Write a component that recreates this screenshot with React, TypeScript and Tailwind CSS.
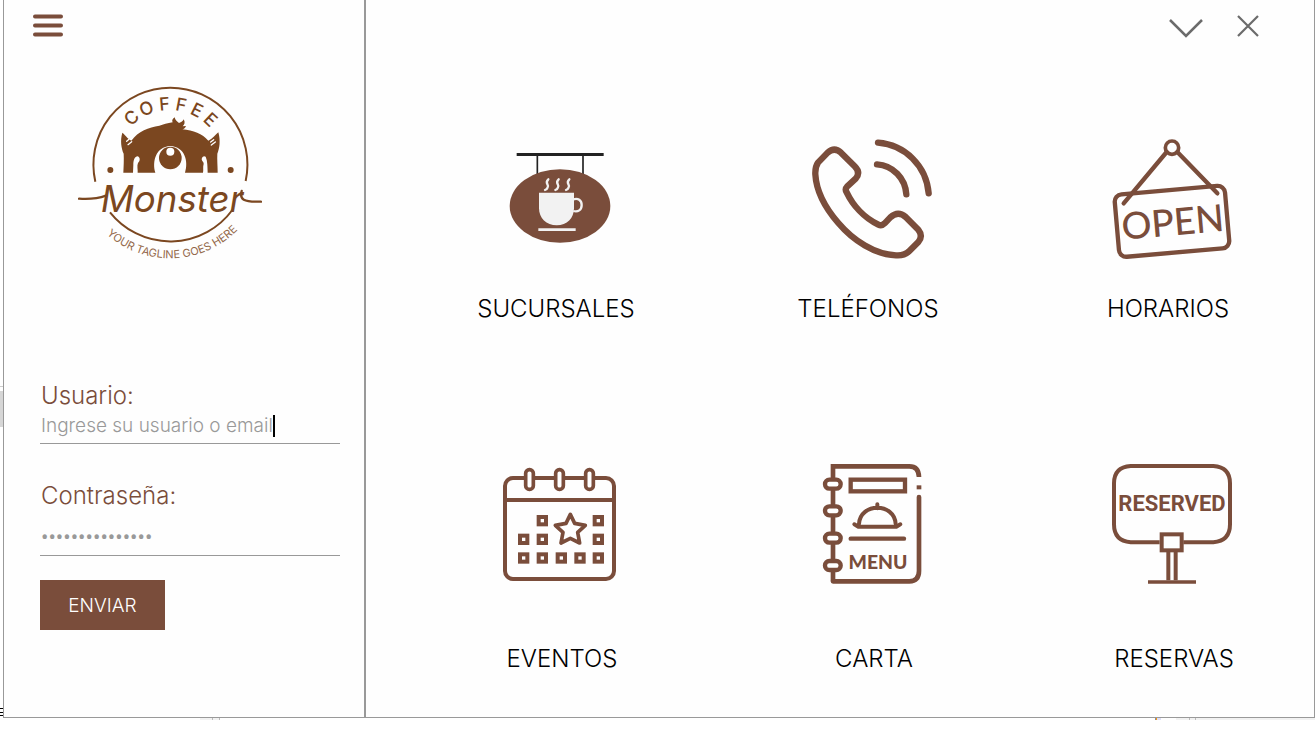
import type { ReactNode } from "react";

const BROWN = "#7a4d3b";
const LOGO = "#7b4720";

type Glyph = { char: string; angle: number; width: number };

const COFFEE: Glyph[] = [
  { char: "C", angle: -40, width: 41 },
  { char: "O", angle: -23, width: 43 },
  { char: "F", angle: -5, width: 33 },
  { char: "F", angle: 11, width: 33 },
  { char: "E", angle: 27, width: 34 },
  { char: "E", angle: 43, width: 34 },
];

function CoffeeArc() {
  const radius = 160;
  const placed = COFFEE.map(({ angle, width }) => {
    const a = (angle * Math.PI) / 180;
    return {
      x: 300 + radius * Math.sin(a) - (width / 2) * Math.cos(a),
      y: 265 - radius * Math.cos(a) - (width / 2) * Math.sin(a),
    };
  });
  return (
    <text
      x={placed.map((p) => p.x.toFixed(1)).join(" ")}
      y={placed.map((p) => p.y.toFixed(1)).join(" ")}
      rotate={COFFEE.map((g) => g.angle).join(" ")}
      fontSize="54"
      fontWeight="500"
      fill={LOGO}
    >
      COFFEE
    </text>
  );
}

function Logo() {
  return (
    <svg viewBox="24 33 552 522" className="h-[174px] w-[184px] font-['Inter',sans-serif]" role="img" aria-label="Coffee Monster">
      <g fill="none" stroke={LOGO} strokeWidth="6">
        <path d="M76 320A231 231 0 1 1 527 318" />
        <path d="M120 412A231 231 0 0 0 487 405" />
        <path d="M27 371C55 373 80 372 108 362" strokeWidth="7" strokeLinecap="round" />
        <path d="M515 348C508 374 520 381 573 380" strokeWidth="7" strokeLinecap="round" />
      </g>
      <CoffeeArc />
      <path
        fill={LOGO}
        d="M157 173C165 178 171 190 184 197C205 168 236 157 268 152C280 148 292 145 308 142C305 137 307 132 314 127C315 135 321 139 327 144C334 142 339 138 341 133C346 142 344 149 338 154L348 153C346 159 342 162 337 163C370 166 397 176 415 197C429 190 436 180 445 172C452 196 449 220 442 236C441 254 443 274 443 293H413C412 274 413 259 407 245C402 241 396 245 395 253C396 260 402 261 401 267C398 276 401 285 399 293H345C356 260 345 215 301 213C257 215 246 260 256 293H203C204 283 200 273 204 264C211 258 211 247 203 244C194 244 190 255 190 270L189 293H160C161 274 162 255 161 236C154 220 150 196 157 173Z"
      />
      <path fill="none" stroke="#fff" strokeWidth="4" strokeLinecap="round" d="M170 199l7-6M174 209l11-9M422 201l9-7M424 210l12-9" />
      <circle cx="301" cy="249" r="34" fill={LOGO} />
      <circle cx="301" cy="230" r="12" fill="#fff" />
      <circle cx="121" cy="285" r="9" fill={LOGO} />
      <circle cx="482" cy="285" r="9" fill={LOGO} />
      <text x="306" y="412" textAnchor="middle" fontSize="110" fontStyle="italic" fontWeight="400" fill={LOGO}>
        Monster
      </text>
      <path id="tagline-arc" d="M15 265A285 285 0 0 0 585 265" fill="none" />
      <text fontSize="33" fill="#94694a" textAnchor="middle">
        <textPath href="#tagline-arc" startOffset="51%">
          YOUR TAGLINE GOES HERE
        </textPath>
      </text>
    </svg>
  );
}

const iconClass = "size-[120px] font-['Inter',sans-serif]";

function BranchIcon() {
  return (
    <svg viewBox="30 27 360 360" className={iconClass} aria-hidden="true">
      <path d="M80 73.500H341" stroke="#222" strokeWidth="9" />
      <path d="M142 78V135M279 78V135" stroke="#222" strokeWidth="5" />
      <ellipse cx="210" cy="228" rx="151" ry="110" fill={BROWN} />
      <path d="M147 188H252V235C252 264 231 286 200 286C169 286 147 264 147 235Z" fill="#f2f2f2" />
      <g fill="none" stroke="#f2f2f2">
        <path d="M250 208C264 203 275 211 275 225C275 240 264 247 250 243" strokeWidth="7" />
        <path d="M145 299H257" strokeWidth="8" />
        <path d="M175 148C162 159 179 165 173 172Q171 178 165 180M206 148C193 159 210 165 204 172Q202 178 196 180M238 148C225 159 242 165 236 172Q234 178 228 180" strokeWidth="7" strokeLinecap="round" />
      </g>
    </svg>
  );
}

function PhoneIcon() {
  return (
    <svg viewBox="66 27 360 360" className={iconClass} aria-hidden="true">
      <g fill="none" stroke={BROWN} strokeWidth="19" strokeLinecap="round" strokeLinejoin="round">
        <path d="M84 98L113 68Q133 50 153 68L194 109Q213 128 197 146L171 170Q164 177 170 187C188 225 222 263 265 284Q275 289 284 280L301 262Q324 241 347 261L385 299Q400 318 385 336L358 363Q343 378 318 376C255 374 190 332 145 279C105 233 79 184 76 133Q75 111 84 98Z" />
        <path d="M261 103C309 106 346 145 349 193" />
        <path d="M264 38C344 44 409 107 416 190" />
      </g>
    </svg>
  );
}

function OpenIcon() {
  return (
    <svg viewBox="66 27 360 360" className={iconClass} aria-hidden="true">
      <g fill="none" stroke={BROWN} strokeWidth="13" strokeLinecap="round" strokeLinejoin="round">
        <circle cx="246" cy="53" r="20" strokeWidth="11" />
        <path d="M230 66L101 220M262 66L382 190" />
        <rect x="80" y="180" width="332" height="188" rx="22" transform="rotate(-5 246 274)" />
      </g>
      <text
        x="248"
        y="316"
        textAnchor="middle"
        fontSize="112"
        fontWeight="500"
        fill={BROWN}
        transform="rotate(-5 248 274)"
        className="font-['Lato',sans-serif]"
      >
        OPEN
      </text>
    </svg>
  );
}

const DAYS: [number, number][] = [
  [157, 197], [325, 197],
  [101, 253], [157, 253], [325, 253],
  [101, 309], [157, 309], [214, 309], [270, 309], [325, 309],
];

function CalendarIcon() {
  return (
    <svg viewBox="30 27 360 360" className={iconClass} aria-hidden="true">
      <g fill="none" stroke={BROWN} strokeWidth="12">
        <rect x="45" y="69" width="327" height="303" rx="24" />
        <path d="M45 135H372" />
        {DAYS.map(([x, y]) => (
          <rect key={`${x}-${y}`} x={x - 11} y={y - 11} width="22" height="22" />
        ))}
        <path d="M241 178L254 205L286 211L263 232L269 264L241 250L213 264L219 232L196 211L228 205Z" strokeWidth="11" strokeLinejoin="round" />
        <g fill="#fff" strokeWidth="11">
          <rect x="107" y="44" width="23" height="59" rx="11" />
          <rect x="197" y="44" width="23" height="59" rx="11" />
          <rect x="287" y="44" width="23" height="59" rx="11" />
        </g>
      </g>
    </svg>
  );
}

function MenuCardIcon() {
  return (
    <svg viewBox="36 27 360 360" className={iconClass} aria-hidden="true">
      <g fill="none" stroke={BROWN} strokeWidth="14">
        <path d="M99 379V34H328Q356 34 357 66" />
        <path d="M99 379H328Q357 378 357 348V126" strokeLinecap="round" />
        <path d="M350 97H364" strokeWidth="12" />
        <rect x="152" y="74" width="163" height="35" strokeWidth="13" />
        <path d="M177 207C180 142 284 142 287 207M232 148V160" strokeWidth="12" strokeLinecap="round" />
        <path d="M163 208L175 215H289L301 208" strokeWidth="12" strokeLinecap="round" strokeLinejoin="round" />
        <path d="M152 251H312" strokeWidth="13" strokeLinecap="round" />
        <g fill="#fff" strokeWidth="13">
          <rect x="75" y="74" width="47" height="27" rx="13" />
          <rect x="75" y="154" width="47" height="27" rx="13" />
          <rect x="75" y="236" width="47" height="27" rx="13" />
          <rect x="75" y="318" width="47" height="27" rx="13" />
        </g>
      </g>
      <text x="234" y="341" textAnchor="middle" fontSize="58" fontWeight="900" fill={BROWN} className="font-['Lato',sans-serif]">
        MENU
      </text>
    </svg>
  );
}

function ReservedIcon() {
  return (
    <svg viewBox="66 27 360 360" className={iconClass} aria-hidden="true">
      <g fill="none" stroke={BROWN} strokeWidth="12">
        <path d="M209 262H122Q72 258 72 208V85Q72 36 122 33H370Q420 36 420 85V208Q420 258 370 262H280" />
        <rect x="215" y="238" width="60" height="48" />
        <path d="M235 290V376M257 290V376" />
        <path d="M174 381H318" strokeWidth="11" />
      </g>
      <text x="246" y="167" textAnchor="middle" fontSize="66" fontWeight="700" fill={BROWN} className="font-['Liberation_Sans_Narrow','Roboto',sans-serif]">
        RESERVED
      </text>
    </svg>
  );
}

type Tile = { label: string; icon: ReactNode };

const TOP: Tile[] = [
  { label: "SUCURSALES", icon: <BranchIcon /> },
  { label: "TELÉFONOS", icon: <PhoneIcon /> },
  { label: "HORARIOS", icon: <OpenIcon /> },
];

const BOTTOM: Tile[] = [
  { label: "EVENTOS", icon: <CalendarIcon /> },
  { label: "CARTA", icon: <MenuCardIcon /> },
  { label: "RESERVAS", icon: <ReservedIcon /> },
];

function TileRow({ tiles, gap, labelPad }: { tiles: Tile[]; gap: string; labelPad: string }) {
  return (
    <div className="grid grid-cols-[300fr_324fr_276fr] pl-11 pr-1">
      {tiles.map(({ label, icon }) => (
        <button key={label} type="button" className={`flex flex-col items-center ${gap}`}>
          {icon}
          <span className={`text-2xl font-light leading-8 text-black ${labelPad}`}>{label}</span>
        </button>
      ))}
    </div>
  );
}

function Sidebar() {
  return (
    <aside className="flex w-[362px] shrink-0 flex-col border-r-2 border-[#999] pl-9 pr-6">
      <button type="button" aria-label="Menú" className="-ml-2 mt-3 w-fit">
        <svg viewBox="0 0 32 26" className="h-[26px] w-8" fill="none" stroke={BROWN} strokeWidth="4" strokeLinecap="round" aria-hidden="true">
          <path d="M3 4.500H29M3 13.500H29M3 22.500H29" />
        </svg>
      </button>
      <div className="mt-12 flex pl-[38px]">
        <Logo />
      </div>
      <form className="mt-[120px] flex flex-col" onSubmit={(e) => e.preventDefault()}>
        <label htmlFor="usuario" className="pl-px text-2xl font-light leading-8 text-[#7a4d3b]">
          Usuario:
        </label>
        <div className="flex h-8 items-center border-b border-[#999] pb-1 pl-px">
          <input
            id="usuario"
            type="text"
            defaultValue="Ingrese su usuario o email"
            className="field-sizing-content text-[19px] font-light leading-6 text-[#999] outline-none"
          />
          <span className="h-[22px] w-0.5 bg-black" />
        </div>
        <label htmlFor="clave" className="mt-9 pl-px text-2xl font-light leading-8 text-[#7a4d3b]">
          Contraseña:
        </label>
        <div className="flex h-11 items-center border-b border-[#999] pl-px pt-2">
          <input
            id="clave"
            type="password"
            defaultValue="contrasena12345"
            className="w-full font-['Roboto',sans-serif] text-[22px] leading-6 text-[#999] outline-none"
          />
        </div>
        <button type="submit" className="mt-6 h-[50px] w-[125px] bg-[#7a4d3b] pt-0.5 text-[19px] font-light text-white">
          ENVIAR
        </button>
      </form>
    </aside>
  );
}

function Gutter() {
  return (
    <div className="flex w-[3px] shrink-0 flex-col">
      <div className="mt-[386px] h-px bg-[#ccc]" />
      <div className="mt-1 h-9 bg-[#d6d6d6]" />
      <div className="mb-0.5 mt-auto flex h-2 flex-col justify-between">
        <div className="h-px bg-black" />
        <div className="h-px bg-black" />
        <div className="h-px bg-black" />
      </div>
    </div>
  );
}

function BottomEdge() {
  return (
    <div className="flex h-0.5">
      <div className="ml-[200px] h-full w-5 border-r border-[#bbb] bg-[#f2f2f2] pl-3">
        <div className="h-full w-px bg-[#bbb]" />
      </div>
      <div className="ml-auto flex w-[160px]">
        <div className="w-px bg-[#8a8a9a]" />
        <div className="w-px bg-[#f90]" />
        <div className="w-1 bg-[#dfdff8]" />
        <div className="ml-[15px] flex flex-1 gap-[5px] bg-[#f2f2f2] pl-[13px]">
          <div className="w-px bg-[#bbb]" />
          <div className="w-px bg-[#bbb]" />
        </div>
      </div>
    </div>
  );
}

export default function App() {
  return (
    <div className="flex min-h-screen flex-col bg-white pb-3 font-['Inter',sans-serif]">
      <div className="flex flex-1">
        <Gutter />
        <div className="flex flex-1 border-x border-b border-[#999] bg-[#fefefe]">
          <Sidebar />
          <main className="flex flex-1 flex-col">
            <header className="flex h-[52px] items-center justify-end gap-[34px] pr-[55px]">
              <button type="button" aria-label="Minimizar">
                <svg viewBox="0 0 34 24" className="h-6 w-[34px]" fill="none" stroke="#6b6b6b" strokeWidth="2.500" aria-hidden="true">
                  <path d="M1 6L17 22L33 6" />
                </svg>
              </button>
              <button type="button" aria-label="Cerrar">
                <svg viewBox="0 0 22 22" className="size-[22px]" fill="none" stroke="#6b6b6b" strokeWidth="2.200" aria-hidden="true">
                  <path d="M1 1L21 21M21 1L1 21" />
                </svg>
              </button>
            </header>
            <div className="flex flex-col gap-[139px] pt-[87px]">
              <TileRow tiles={TOP} gap="gap-[34px]" labelPad="pr-2" />
              <TileRow tiles={BOTTOM} gap="gap-[59px]" labelPad="pl-1" />
            </div>
          </main>
        </div>
      </div>
      <BottomEdge />
    </div>
  );
}
